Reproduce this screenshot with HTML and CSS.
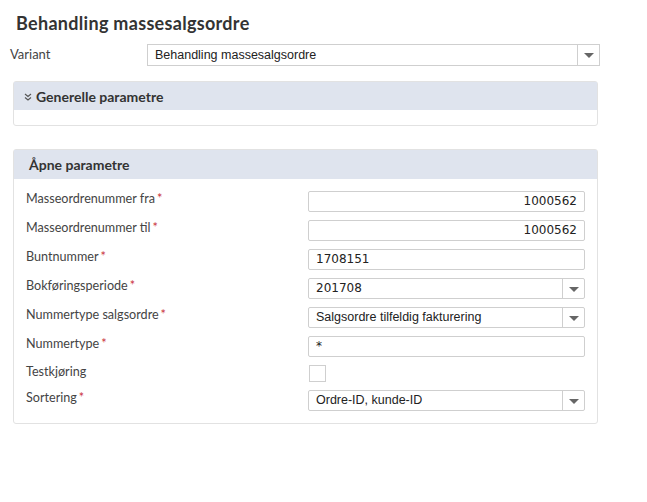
FILE: index.html
```html
<!DOCTYPE html>
<html lang="no">
<head>
<meta charset="utf-8">
<title>Behandling massesalgsordre</title>
<link rel="stylesheet" href="styles.css">
</head>
<body>
<div class="page">
  <h1 class="title">Behandling massesalgsordre</h1>
  <div class="variant-row">
    <span class="variant-label">Variant</span>
    <div class="select variant-select">
      <span class="select-text">Behandling massesalgsordre</span>
      <span class="select-btn"><span class="caret"></span></span>
    </div>
  </div>

  <section class="panel panel-general">
    <div class="panel-head">
      <svg class="chev" width="8" height="8" viewBox="0 0 8 8"><path d="M1 1 L4 3.5 L7 1 M1 4.5 L4 7 L7 4.5" fill="none" stroke="#555" stroke-width="1.1"/></svg>
      <span>Generelle parametre</span>
    </div>
    <div class="panel-body empty"></div>
  </section>

  <section class="panel panel-open">
    <div class="panel-head"><span>Åpne parametre</span></div>
    <div class="panel-body form">
      <div class="row"><span class="label">Masseordrenummer fra<span class="req">*</span></span><div class="input num right">1000562</div></div>
      <div class="row"><span class="label">Masseordrenummer til<span class="req">*</span></span><div class="input num right">1000562</div></div>
      <div class="row"><span class="label">Buntnummer<span class="req">*</span></span><div class="input num">1708151</div></div>
      <div class="row"><span class="label">Bokføringsperiode<span class="req">*</span></span><div class="select field"><span class="select-text num">201708</span><span class="select-btn"><span class="caret"></span></span></div></div>
      <div class="row"><span class="label">Nummertype salgsordre<span class="req">*</span></span><div class="select field"><span class="select-text">Salgsordre tilfeldig fakturering</span><span class="select-btn"><span class="caret"></span></span></div></div>
      <div class="row"><span class="label">Nummertype<span class="req">*</span></span><div class="input num">*</div></div>
      <div class="row row-check"><span class="label">Testkjøring</span><div class="checkbox"></div></div>
      <div class="row"><span class="label">Sortering<span class="req">*</span></span><div class="select field"><span class="select-text">Ordre-ID, kunde-ID</span><span class="select-btn"><span class="caret"></span></span></div></div>
    </div>
  </section>
</div>
</body>
</html>
```

FILE: styles.css
```css
* { box-sizing: border-box; }
html, body { margin: 0; padding: 0; background: #fff; }
body { font-family: Lato, "Open Sans", sans-serif; color: #333; }

.page { padding: 12px 0 0 0; width: 647px; }

.title {
  margin: 0 0 0 16px;
  font-size: 18px;
  font-weight: 700;
  line-height: 22px;
  color: #333;
  letter-spacing: 0.3px;
}

.variant-row {
  display: flex;
  align-items: flex-start;
  margin-top: 10px;
  padding-left: 10px;
}
.variant-label {
  width: 137px;
  font-size: 13px;
  line-height: 18px;
  color: #444;
  padding-top: 1px;
}

.select {
  display: flex;
  height: 22px;
  border: 1px solid #cfcfcf;
  background: #fff;
}
.variant-select { width: 453px; }
.select-text {
  flex: 1;
  font-family: "Liberation Sans", Arial, sans-serif;
  font-size: 12.5px;
  line-height: 20px;
  padding-left: 7px;
  color: #222;
  white-space: nowrap;
  overflow: hidden;
}
.select-btn {
  width: 22px;
  border-left: 1px solid #cfcfcf;
  display: flex;
  align-items: center;
  justify-content: center;
}
.caret {
  width: 0; height: 0;
  border-left: 5px solid transparent;
  border-right: 5px solid transparent;
  border-top: 5px solid #666;
  margin-top: 1px;
}

.panel {
  margin-left: 13px;
  width: 585px;
  border: 1px solid #e2e2e2;
  border-radius: 3px;
  background: #fff;
}
.panel-general { margin-top: 15px; }
.panel-open { margin-top: 23px; }

.panel-head {
  background: #dfe4ee;
  height: 28px;
  display: flex;
  align-items: center;
  font-size: 14px;
  font-weight: 700;
  color: #333;
}
.panel-general .panel-head { padding-left: 10px; }
.panel-general .chev { margin-right: 4px; margin-top: 1px; }
.panel-open .panel-head { height: 29px; padding-left: 15px; }

.panel-body.empty { height: 15px; }

.form {
  padding: 12px 12px 12px 12px;
  display: flex;
  flex-direction: column;
  gap: 8px;
}
.row {
  display: flex;
  align-items: flex-start;
}
.label {
  width: 282px;
  font-size: 12.6px;
  line-height: 16px;
  color: #444;
}
.req { color: #c9303a; margin-left: 2px; }

.input, .select.field {
  width: 277px;
  height: 21px;
  border: 1px solid #cfcfcf;
  border-radius: 2px;
}
.input {
  padding: 0 7px;
  font-size: 12px;
  line-height: 19px;
  color: #222;
}
.num { font-family: "DejaVu Sans", Verdana, sans-serif; font-size: 12px; }
.right { text-align: right; }
.select.field .select-text { line-height: 19px; }
.select.field .select-text.num { font-size: 12px; }

.row-check { height: 17px; }
.row-check .label { margin-top: -1px; }
.checkbox {
  width: 17px;
  height: 17px;
  border: 1px solid #cfcfcf;
  margin-left: 1px;
}
```
